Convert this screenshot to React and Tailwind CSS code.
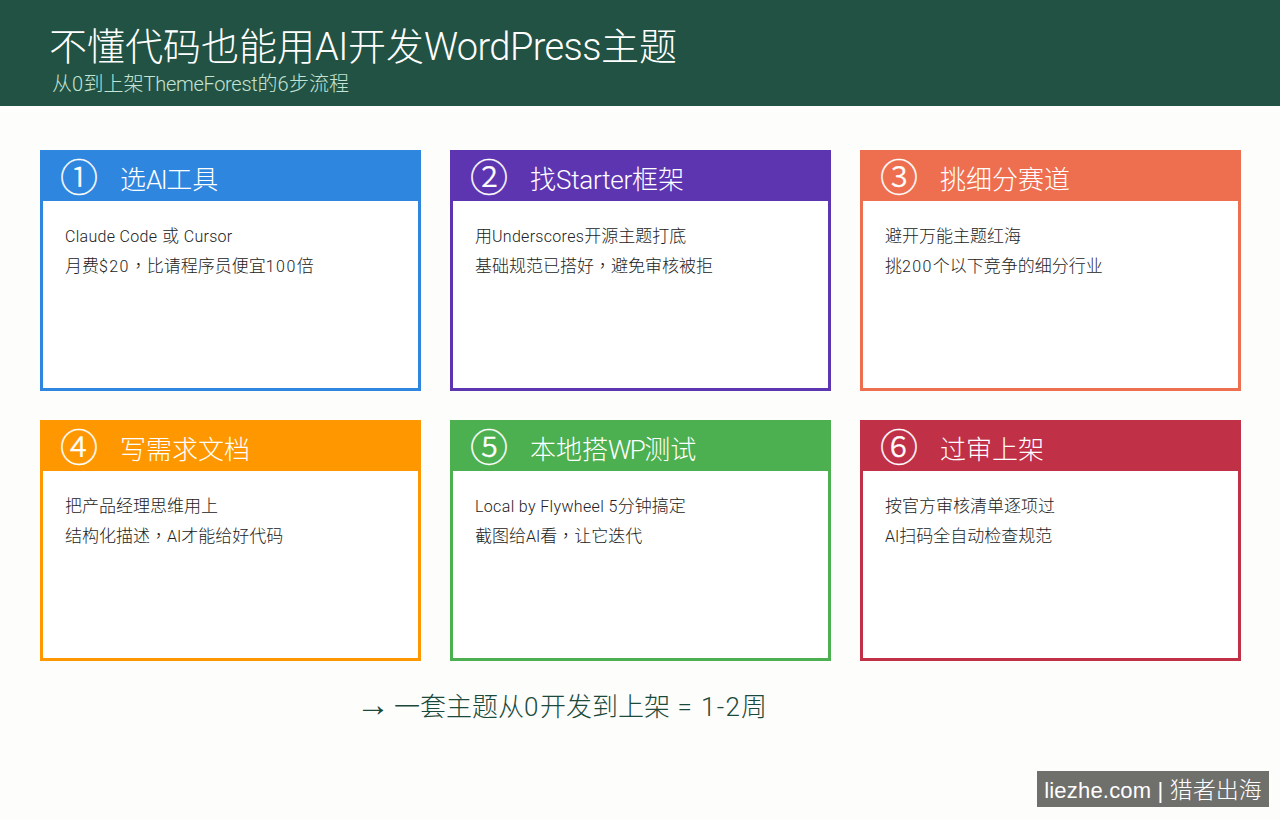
const B = ({ children }) => <span className="font-['Roboto'] text-[16px] leading-none tracking-[0.3px]">{children}</span>;
const D = ({ children }) => <span className="font-['Roboto'] text-[16px] leading-none tracking-[1.4px]">{children}</span>;
const Comma = () => <span className="inline-block w-[17px] text-center leading-none font-['Noto_Sans_CJK_TC','Liberation_Sans',sans-serif]">，</span>;
const H = ({ children, k }) => <span className={k}>{children}</span>;
const AI = () => <span className="font-['Roboto'] text-[16px] leading-none">AI</span>;
const steps = [
  { n: "①", t: <>选<H k="font-['Roboto'] tracking-[-1.5px]">AI</H>工具</>, a: <><B>Claude Code</B> 或 <B>Cursor</B></>, b: <>月费<D>$20</D><Comma />比请程序员便宜<D>100</D>倍</>, c: "bg-[#2e86de]", d: "border-[#2e86de]" },
  { n: "②", t: <>找<H k="font-['Roboto'] tracking-[-0.25px]">Starter</H>框架</>, a: <>用<B>Underscores</B>开源主题打底</>, b: <>基础规范已搭好<Comma />避免审核被拒</>, c: "bg-[#5e35b1]", d: "border-[#5e35b1]" },
  { n: "③", t: "挑细分赛道", a: "避开万能主题红海", b: <>挑<D>200</D>个以下竞争的细分行业</>, c: "bg-[#ee6f4f]", d: "border-[#ee6f4f]" },
  { n: "④", t: "写需求文档", a: "把产品经理思维用上", b: <>结构化描述<Comma /><AI />才能给好代码</>, c: "bg-[#ff9800]", d: "border-[#ff9800]" },
  { n: "⑤", t: <>本地搭<H k="font-['Roboto'] tracking-[-1.5px]">WP</H>测试</>, a: <><span className="font-['Roboto'] text-[16px] leading-none tracking-[0.35px]">Local by Flywheel 5</span>分钟搞定</>, b: <>截图给<AI />看<Comma />让它迭代</>, c: "bg-[#4caf50]", d: "border-[#4caf50]" },
  { n: "⑥", t: "过审上架", a: "按官方审核清单逐项过", b: <><AI />扫码全自动检查规范</>, c: "bg-[#c03047]", d: "border-[#c03047]" },
];
const font = "font-['Liberation_Sans','Noto_Sans_CJK_SC',sans-serif]";
export default function App() {
  return (
    <div className={`relative w-[1280px] h-[820px] overflow-hidden bg-[#fdfdfb] ${font}`}>
      <header className="h-[106px] bg-[#225244] pl-[49px] pt-[21px]">
        <h1 className="text-[38px] leading-[52px] font-light text-white">不懂代码也能用<span className="font-['Roboto'] tracking-[-0.5px]">AI</span>开发<span className="font-['Roboto'] tracking-[-0.6px]">WordPress</span>主题</h1>
        <p className="pl-[3px] -mt-[2px] text-[20px] leading-[26px] font-light text-[#c4e4d5]">从<span className="font-['Roboto'] tracking-[0.5px]">0</span>到上架<span className="font-['Roboto'] tracking-[-0.3px]">ThemeForest</span>的<span className="font-['Roboto'] tracking-[0.5px]">6</span>步流程</p>
      </header>
      <main className="grid grid-cols-[381px_381px_381px] gap-x-[29px] gap-y-[29px] pl-[40px] pt-[44px]">
        {steps.map((s) => (
          <section key={s.n} className={`h-[241px] border-[3px] bg-white ${s.d}`}>
            <div className={`flex h-[48px] items-center pl-[17px] text-white ${s.c}`}>
              <span className="w-[60px] pt-[2px] text-[38px] leading-[48px] font-light [-webkit-text-stroke:0.4px_white]">{s.n}</span>
              <span className="pt-[5px] text-[26px] leading-[48px] font-light">{s.t}</span>
            </div>
            <div className="pl-[22px] pt-[21px] text-[17px] leading-[30px] font-light text-[#222222]">
              <p>{s.a}</p>
              <p>{s.b}</p>
            </div>
          </section>
        ))}
      </main>
      <p className="mt-[26px] pl-[356px] text-[26px] leading-[40px] font-light text-[#1b4a3c]"><span className="inline-block w-[38px] text-[34px] leading-none">→</span>一套主题从<span className="font-['Roboto'] tracking-[1.5px]">0</span>开发到上架<span className="font-['Roboto'] tracking-[1.3px]"> = 1-2</span>周</p>
      <div className="absolute left-[1037px] top-[771px] flex h-[36px] w-[232px] items-center justify-center bg-[#6f6f6c] pt-[3px] text-[23px] font-light text-white"><p><span className="text-[22px] tracking-[0.2px]">liezhe.com | </span>猎者出海</p></div>
    </div>
  );
}
